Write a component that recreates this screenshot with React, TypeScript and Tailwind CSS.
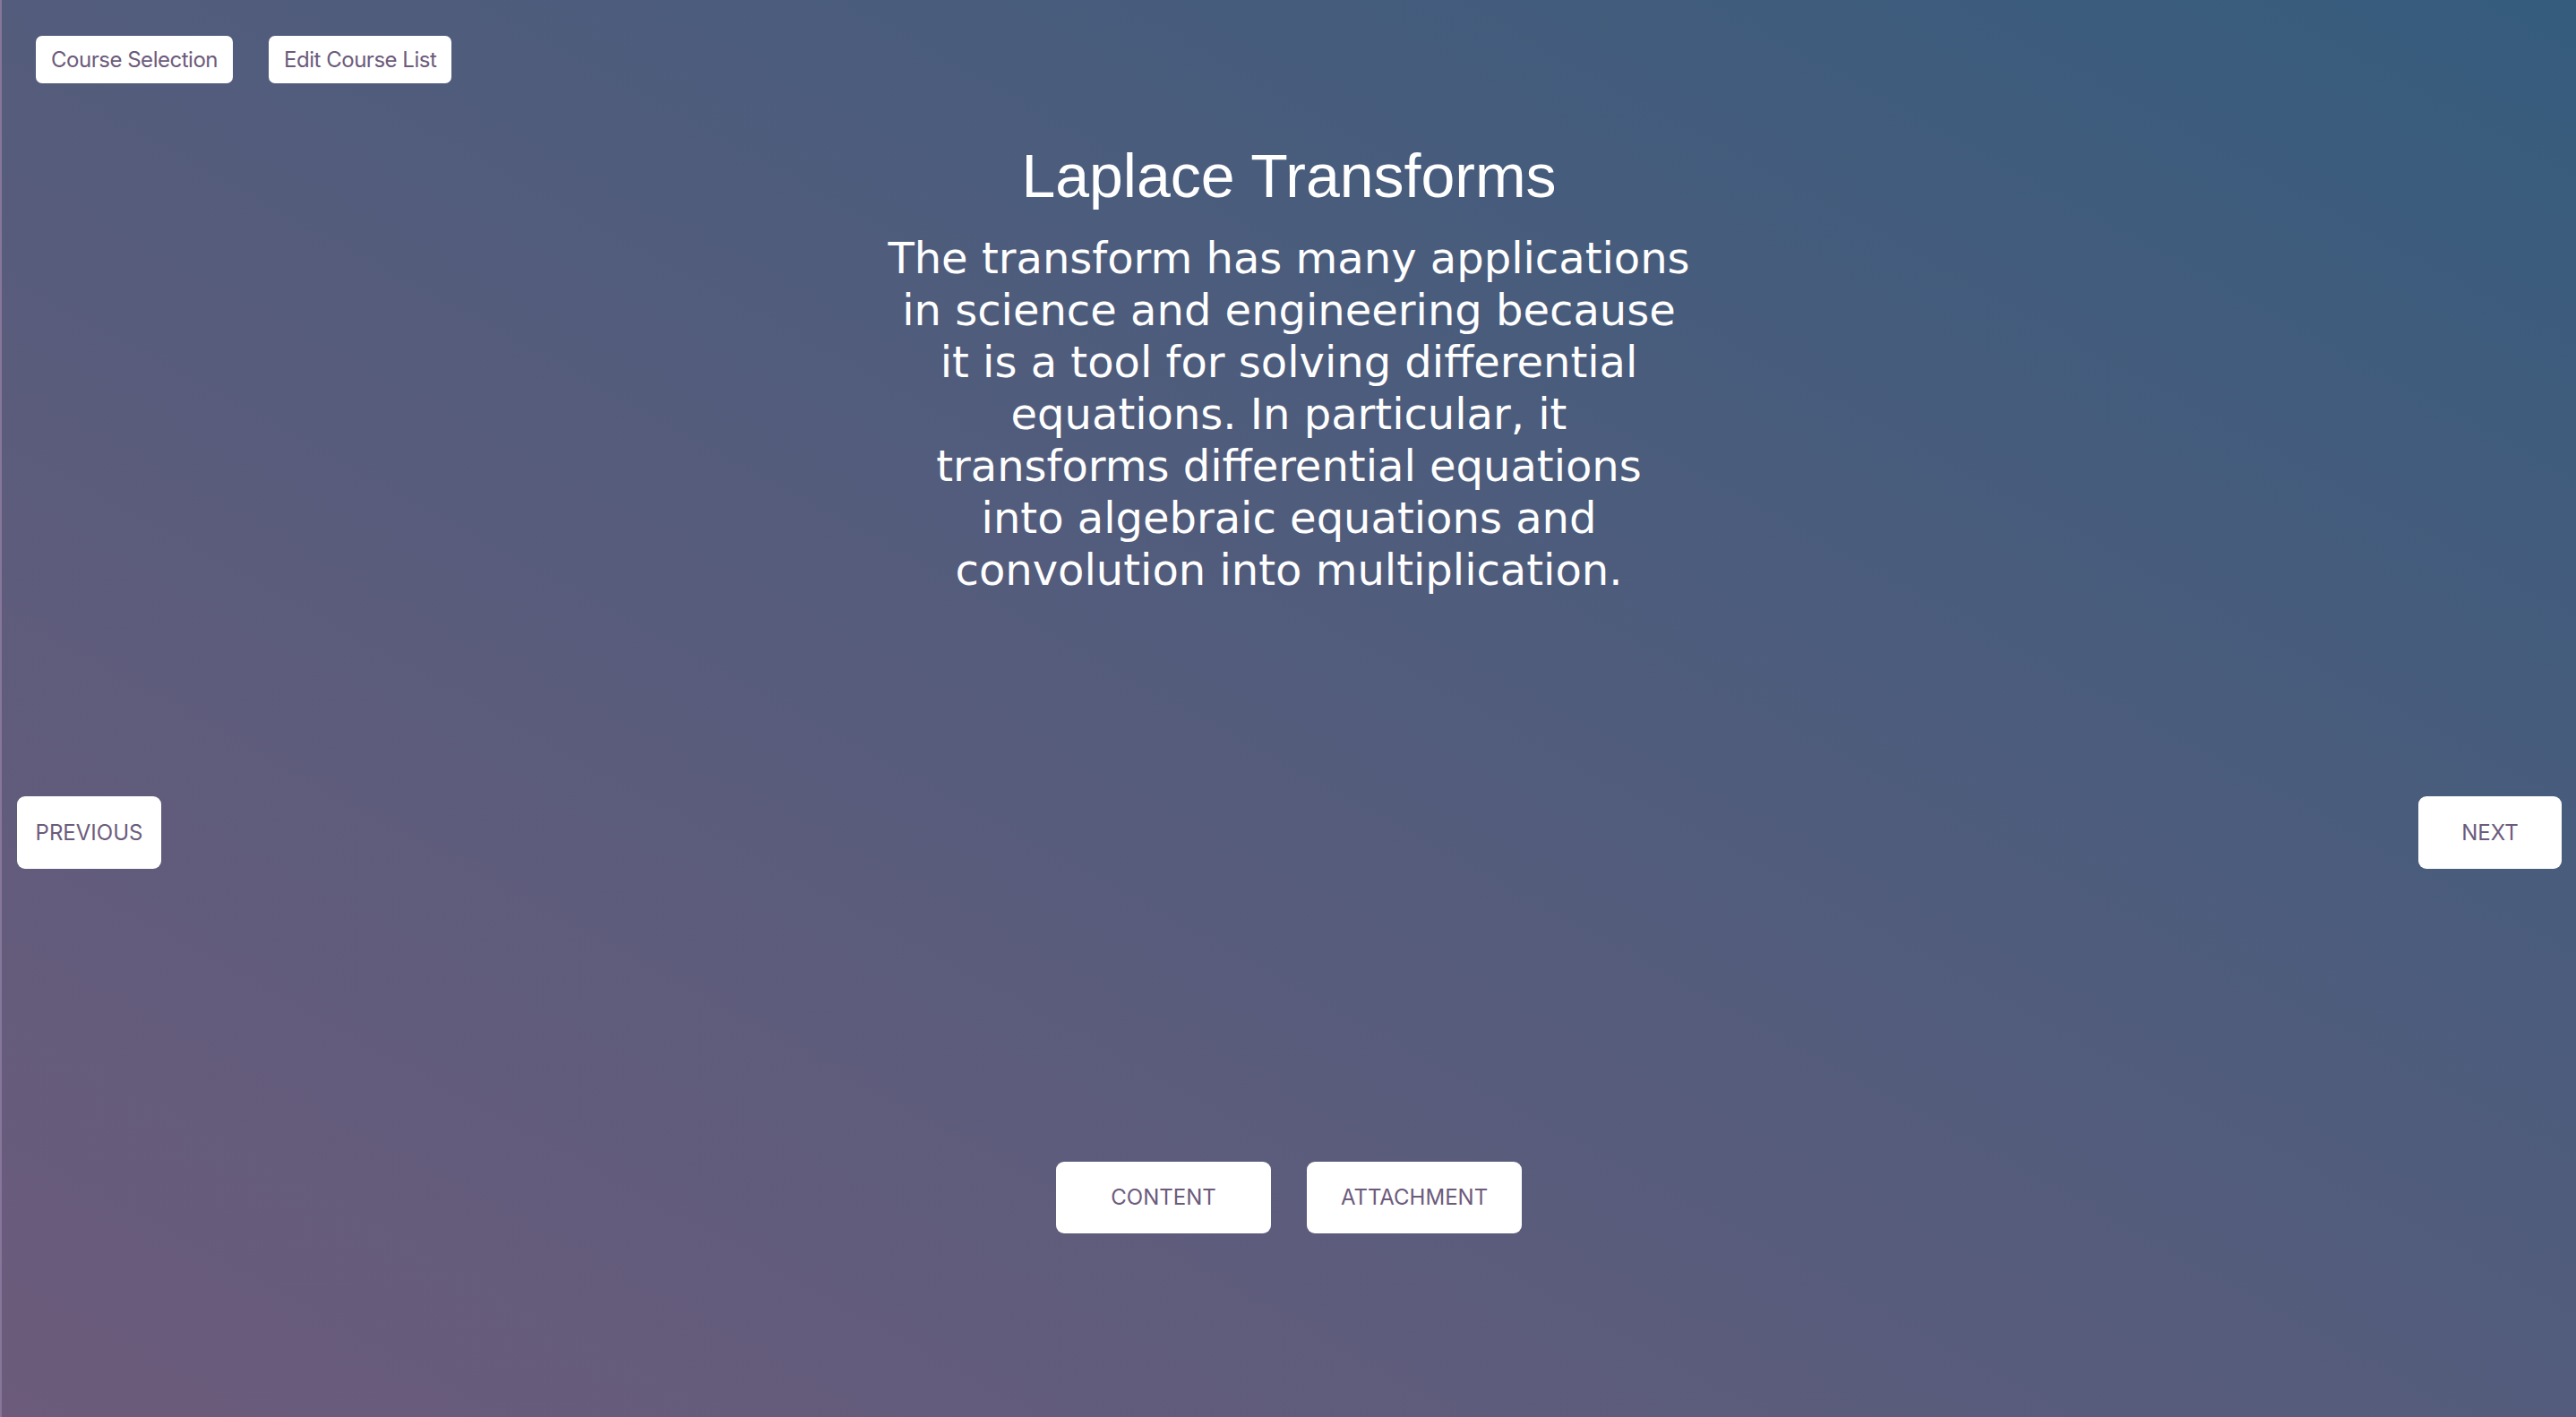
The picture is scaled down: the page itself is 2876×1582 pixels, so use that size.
const Btn = ({
  label,
  className,
}: {
  label: string;
  className: string;
}) => (
  <button
    className={`flex items-center justify-center bg-white text-[#6c5b7b] font-['Inter',sans-serif] ${className}`}
  >
    {label}
  </button>
);

const lines = [
  "The transform has many applications",
  "in science and engineering because",
  "it is a tool for solving differential",
  "equations. In particular, it",
  "transforms differential equations",
  "into algebraic equations and",
  "convolution into multiplication.",
];

const App = () => {
  return (
    <div className="h-screen w-full overflow-hidden border-l-2 border-[#86779a] bg-gradient-to-tr from-[#6c5b7b] to-[#355c7d]">
      <div className="flex gap-[40px] pl-[38px] pt-[40px]">
        <Btn
          label="Course Selection"
          className="h-[53px] px-[17px] rounded-[7px] text-[24px] tracking-[-0.02em]"
        />
        <Btn
          label="Edit Course List"
          className="h-[53px] px-[17px] rounded-[7px] text-[24px] tracking-[-0.02em]"
        />
      </div>

      <h1 className="mt-[69px] text-center text-[68px] leading-none text-white font-['Liberation_Sans',Arial,sans-serif]">
        Laplace Transforms
      </h1>

      <p className="mx-auto mt-[29px] w-[960px] text-center text-[48px] leading-[58px] text-white font-['DejaVu_Sans',Verdana,sans-serif]">
        {lines.map((line, i) => (
          <span key={i} className="block">
            {line}
          </span>
        ))}
      </p>

      <div className="mt-[224px] flex justify-between pl-[17px] pr-[16px]">
        <Btn
          label="PREVIOUS"
          className="h-[81px] w-[161px] rounded-[9px] text-[24px]"
        />
        <Btn label="NEXT" className="h-[81px] w-[160px] rounded-[9px] text-[24px]" />
      </div>

      <div className="mt-[327px] flex justify-center gap-[40px]">
        <Btn
          label="CONTENT"
          className="h-[80px] w-[240px] rounded-[9px] text-[24px]"
        />
        <Btn
          label="ATTACHMENT"
          className="h-[80px] w-[240px] rounded-[9px] text-[24px]"
        />
      </div>
    </div>
  );
};

export default App;
